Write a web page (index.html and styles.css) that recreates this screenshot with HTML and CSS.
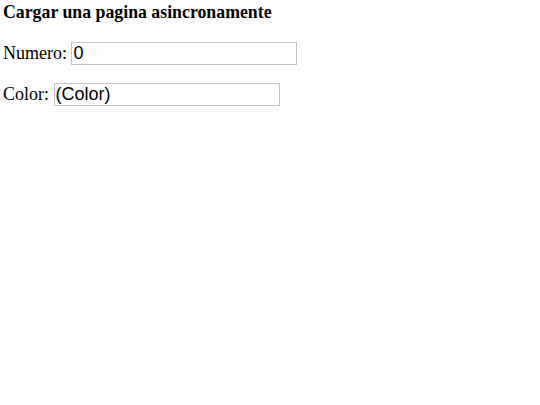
FILE: index.html
```html
<!DOCTYPE html>
<html>
<head>
<meta charset="utf-8">
<link rel="stylesheet" href="styles.css">
</head>
<body>
<h3 class="title">Cargar una pagina asincronamente</h3>
<div class="row"><label class="lbl">Numero:</label> <input class="field" type="text" value="0"></div>
<div class="row"><label class="lbl">Color:</label> <input class="field" type="text" value="(Color)"></div>
</body>
</html>
```
FILE: styles.css
```css
html, body {
  background: #fff;
}
body {
  margin: 0;
  padding: 2px 3px;
  font-family: "Liberation Serif", serif;
  font-size: 18px;
  color: #000;
}
.title {
  font-size: 17.8px;
  font-weight: bold;
  margin: 0 0 18px 0;
  line-height: 21px;
}
.row {
  height: 23px;
  line-height: 23px;
  margin-bottom: 18px;
  white-space: nowrap;
}
.lbl {
  vertical-align: middle;
}
.field {
  box-sizing: border-box;
  vertical-align: middle;
  width: 226px;
  height: 23px;
  border: 1px solid #c4c4c4;
  border-radius: 0;
  padding: 0 1px;
  font-family: "Liberation Sans", sans-serif;
  font-size: 18px;
  color: #000;
  background: #fff;
  margin: 0;
  outline: none;
}
```
